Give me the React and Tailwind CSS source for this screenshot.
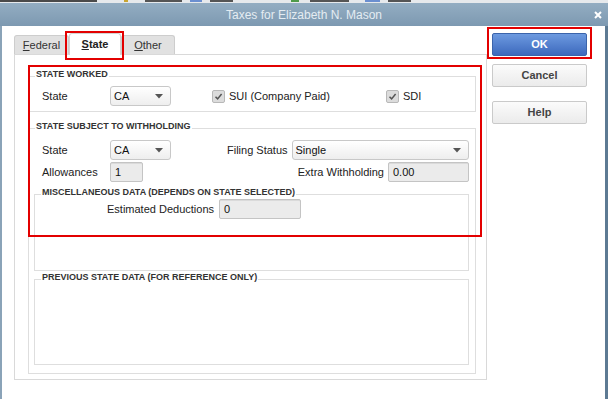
import React from "react";

const font = { fontFamily: '"Liberation Sans", Arial, sans-serif' };

function Arrow() {
	return (
		<svg width="8" height="5" viewBox="0 0 8 5">
			<polygon points="0,0 8,0 4,4.5" fill="#555" />
		</svg>
	);
}

function Dropdown({ value, className }) {
	return (
		<div
			className={
				"flex h-[20px] items-center justify-between rounded-[3px] border border-[#c8c8c8] bg-gradient-to-b from-white to-[#eeeeee] pl-[3px] pr-[7px] text-[11px] text-[#111] " +
				className
			}
		>
			<span>{value}</span>
			<Arrow />
		</div>
	);
}

function Field({ value, className }) {
	return (
		<div
			className={
				"flex h-[20px] items-center rounded-[2px] border border-[#c4c4c4] bg-[#ebebeb] pl-[4px] text-[11px] text-[#111] shadow-[inset_0_1px_0_#dadada] " +
				className
			}
		>
			{value}
		</div>
	);
}

function Check({ label }) {
	return (
		<div className="flex items-center gap-[4px] text-[11px] text-[#222]">
			<div className="flex h-[13px] w-[13px] items-center justify-center rounded-[2px] border border-[#b8b8b8] bg-[#dcdcdc]">
				<svg width="9" height="9" viewBox="0 0 9 9">
					<path d="M1.5 4.8 L3.6 6.9 L7.6 2" stroke="#555" strokeWidth="1.5" fill="none" />
				</svg>
			</div>
			<span>{label}</span>
		</div>
	);
}

// legend box is 14px tall, text sits in the top 10px so the border runs just under the caps
function Group({ title, className = "", children }) {
	return (
		<fieldset className={"border border-[#dedede] " + className}>
			<legend className="ml-[6px] px-[1px] pb-[4px] text-[9px] font-bold leading-[10px] text-[#333]">
				{title}
			</legend>
			{children}
		</fieldset>
	);
}

function Tab({ label, active, className }) {
	const first = label[0];
	const rest = label.slice(1);
	return (
		<div
			className={
				active
					? "relative z-10 -mb-px flex h-[22px] items-center justify-center rounded-t-[3px] border border-b-0 border-[#d4d4d4] bg-white text-[11px] font-bold text-[#222] " + className
					: "flex h-[19px] items-center justify-center rounded-t-[3px] border border-b-0 border-[#cdcdcd] bg-[#e1e1e1] text-[11px] text-[#333] " + className
			}
		>
			<span>
				<span className="underline">{first}</span>
				{rest}
			</span>
		</div>
	);
}

function Button({ label, primary }) {
	return (
		<button
			className={
				primary
					? "h-[23px] w-full rounded-[2px] border border-[#3b64ab] bg-gradient-to-b from-[#6d9ae0] to-[#3d69bd] text-[11px] font-bold text-white"
					: "h-[23px] w-full rounded-[2px] border border-[#cacaca] bg-gradient-to-b from-[#fbfbfb] to-[#ebebeb] text-[11px] font-bold text-[#444]"
			}
		>
			{label}
		</button>
	);
}

export default function App() {
	const strip = [
		[0, 97, "#4a4a4a"],
		[124, 4, "#c9a531"],
		[145, 37, "#555"],
		[190, 12, "#6b8fd0"],
		[210, 23, "#555"],
		[291, 8, "#4e9a4a"],
		[310, 39, "#555"],
		[365, 15, "#6b8fd0"],
		[388, 23, "#555"],
	];

	return (
		<div className="relative h-[399px] w-[608px] overflow-hidden bg-white" style={font}>
			{/* bits of the window behind */}
			<div className="flex h-[3px] bg-[#e6e9ec]">
				{strip.map(([x, w, c], i) => (
					<div
						key={i}
						className="h-[2px]"
						style={{ marginLeft: i === 0 ? x : x - strip[i - 1][0] - strip[i - 1][1], width: w, background: c }}
					/>
				))}
			</div>

			{/* title bar */}
			<div className="relative flex h-[23px] items-center justify-center bg-gradient-to-b from-[#93adc2] to-[#7d99b1]">
				<span className="text-[12px] text-[#e4ecf2]">Taxes for Elizabeth N. Mason</span>
				<svg className="absolute right-[6px] top-[8px]" width="8" height="8" viewBox="0 0 8 8">
					<path d="M1 1 L7 7 M7 1 L1 7" stroke="#fff" strokeWidth="2" />
				</svg>
			</div>

			{/* body */}
			<div className="flex h-[373px] border-l-2 border-r-[3px] border-l-[#8aa3b8] border-r-[#5d7a93]">
				<div className="ml-[12px] mt-[7px] w-[473px]">
					<div className="flex h-[21px] items-end">
						<Tab label="Federal" className="w-[55px]" />
						<Tab label="State" active className="w-[52px]" />
						<Tab label="Other" className="w-[54px]" />
					</div>
					<div className="border border-[#d9d9d9] pb-[5px] pl-[13px] pr-[10px] pt-[14px]">
						<Group title="STATE WORKED">
							<div className="flex items-center pb-[5px] pl-[13px] pt-[3px] text-[11px] text-[#222]">
								<span className="w-[68px]">State</span>
								<Dropdown value="CA" className="w-[61px]" />
								<div className="ml-[41px] w-[174px]">
									<Check label="SUI (Company Paid)" />
								</div>
								<Check label="SDI" />
							</div>
						</Group>

						<Group title="STATE SUBJECT TO WITHHOLDING" className="mt-[9px]">
							<div className="pl-[13px] pr-[6px] pt-[5px] text-[11px] text-[#222]">
								<div className="flex items-center">
									<span className="w-[68px]">State</span>
									<Dropdown value="CA" className="w-[61px]" />
									<span className="ml-[56px]">Filing Status</span>
									<Dropdown value="Single" className="ml-[4px] flex-1" />
								</div>
								<div className="mt-[2px] flex items-center">
									<span className="w-[68px]">Allowances</span>
									<Field value="1" className="w-[33px]" />
									<span className="flex-1 text-right">Extra Withholding</span>
									<Field value="0.00" className="ml-[4px] w-[81px]" />
								</div>
							</div>
							<div className="pb-[8px] pl-[5px] pr-[6px]">
								<Group title="MISCELLANEOUS DATA (DEPENDS ON STATE SELECTED)" className="mt-[5px]">
									<div className="-mt-[2px] flex h-[71px] items-start pl-[72px] text-[11px] text-[#222]">
										<span className="mr-[5px] leading-[20px]">Estimated Deductions</span>
										<Field value="0" className="w-[82px]" />
									</div>
								</Group>
								<Group title="PREVIOUS STATE DATA (FOR REFERENCE ONLY)" className="mt-[1px]">
									<div className="h-[78px]" />
								</Group>
							</div>
						</Group>
					</div>
				</div>

				<div className="ml-[5px] mt-[7px] flex w-[95px] flex-col">
					<Button label="OK" primary />
					<div className="mt-[6px]">
						<Button label="Cancel" />
					</div>
					<div className="mt-[12px]">
						<Button label="Help" />
					</div>
				</div>
			</div>

			{/* red highlight marks */}
			<div className="absolute left-[65px] top-[31px] h-[29px] w-[59px] border-2 border-[#e30000]" />
			<div className="absolute left-[487px] top-[27px] h-[32px] w-[105px] border-2 border-[#e30000]" />
			<div className="absolute left-[28px] top-[65px] h-[172px] w-[454px] border-2 border-[#e30000]" />
		</div>
	);
}
